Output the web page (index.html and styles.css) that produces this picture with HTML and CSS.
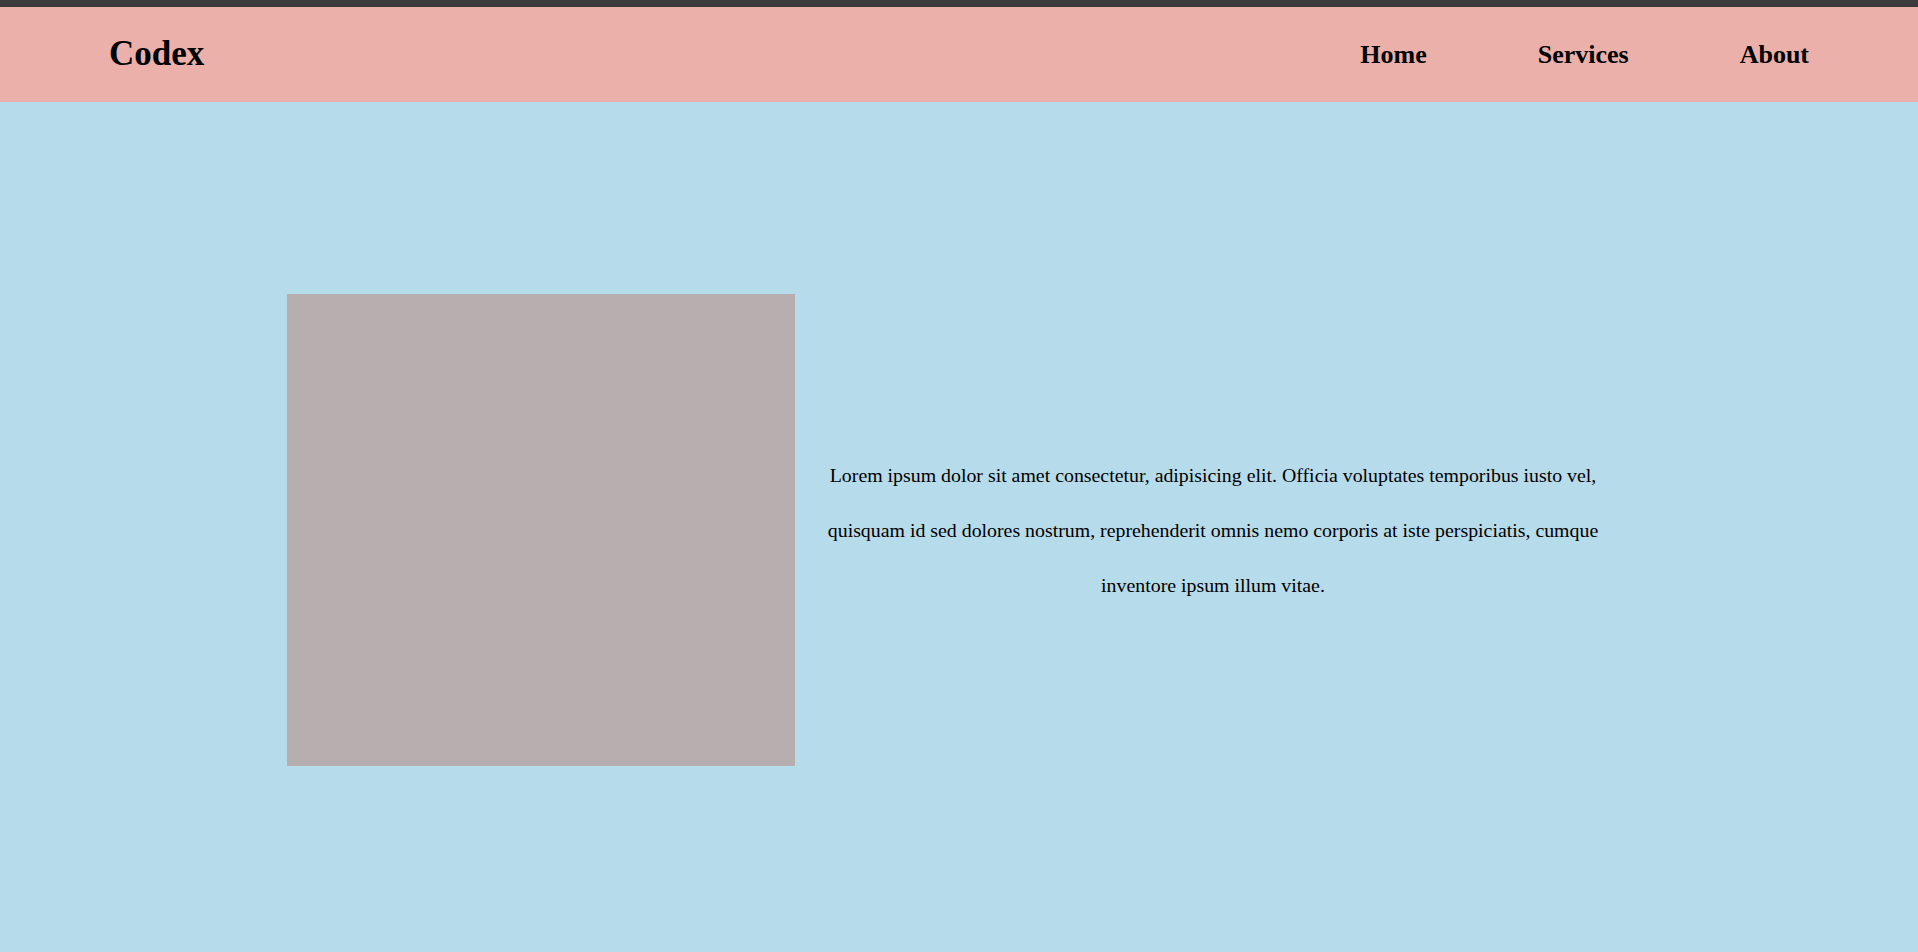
FILE: index.html
```html
<!DOCTYPE html>
<html lang="en">
<head>
<meta charset="utf-8">
<title>Codex</title>
<link rel="stylesheet" href="styles.css">
</head>
<body>
<header class="site-header">
  <div class="logo">Codex</div>
  <nav class="nav">
    <a class="nav-link" href="#">Home</a>
    <a class="nav-link" href="#">Services</a>
    <a class="nav-link" href="#">About</a>
  </nav>
</header>
<main class="hero">
  <div class="hero-image"></div>
  <p class="hero-text">Lorem ipsum dolor sit amet consectetur, adipisicing elit. Officia voluptates temporibus iusto vel, quisquam id sed dolores nostrum, reprehenderit omnis nemo corporis at iste perspiciatis, cumque inventore ipsum illum vitae.</p>
</main>
</body>
</html>
```

FILE: styles.css
```css
html, body {
  margin: 0;
  padding: 0;
}

body {
  font-family: "Liberation Serif", "Times New Roman", serif;
  background: #b6dbea;
  color: #000;
  overflow: hidden;
}

.site-header {
  box-sizing: border-box;
  height: 102px;
  border-top: 7px solid #3b3b3b;
  background: #ecb0aa;
  display: flex;
  align-items: center;
  justify-content: space-between;
  padding: 0 109px 0 109px;
}

.logo {
  font-size: 35px;
  font-weight: bold;
  padding-bottom: 2px;
}

.nav {
  display: flex;
  gap: 111px;
}

.nav-link {
  font-size: 26px;
  font-weight: bold;
  color: #000;
  text-decoration: none;
}

.hero {
  box-sizing: border-box;
  height: 850px;
  padding: 6px 287px 0 287px;
  display: flex;
  align-items: center;
}

.hero-image {
  flex: 0 0 508px;
  height: 472px;
  background: #b6aeaf;
}

.hero-text {
  flex: 1;
  margin: 0;
  font-size: 19.85px;
  line-height: 55px;
  text-align: center;
}
```
